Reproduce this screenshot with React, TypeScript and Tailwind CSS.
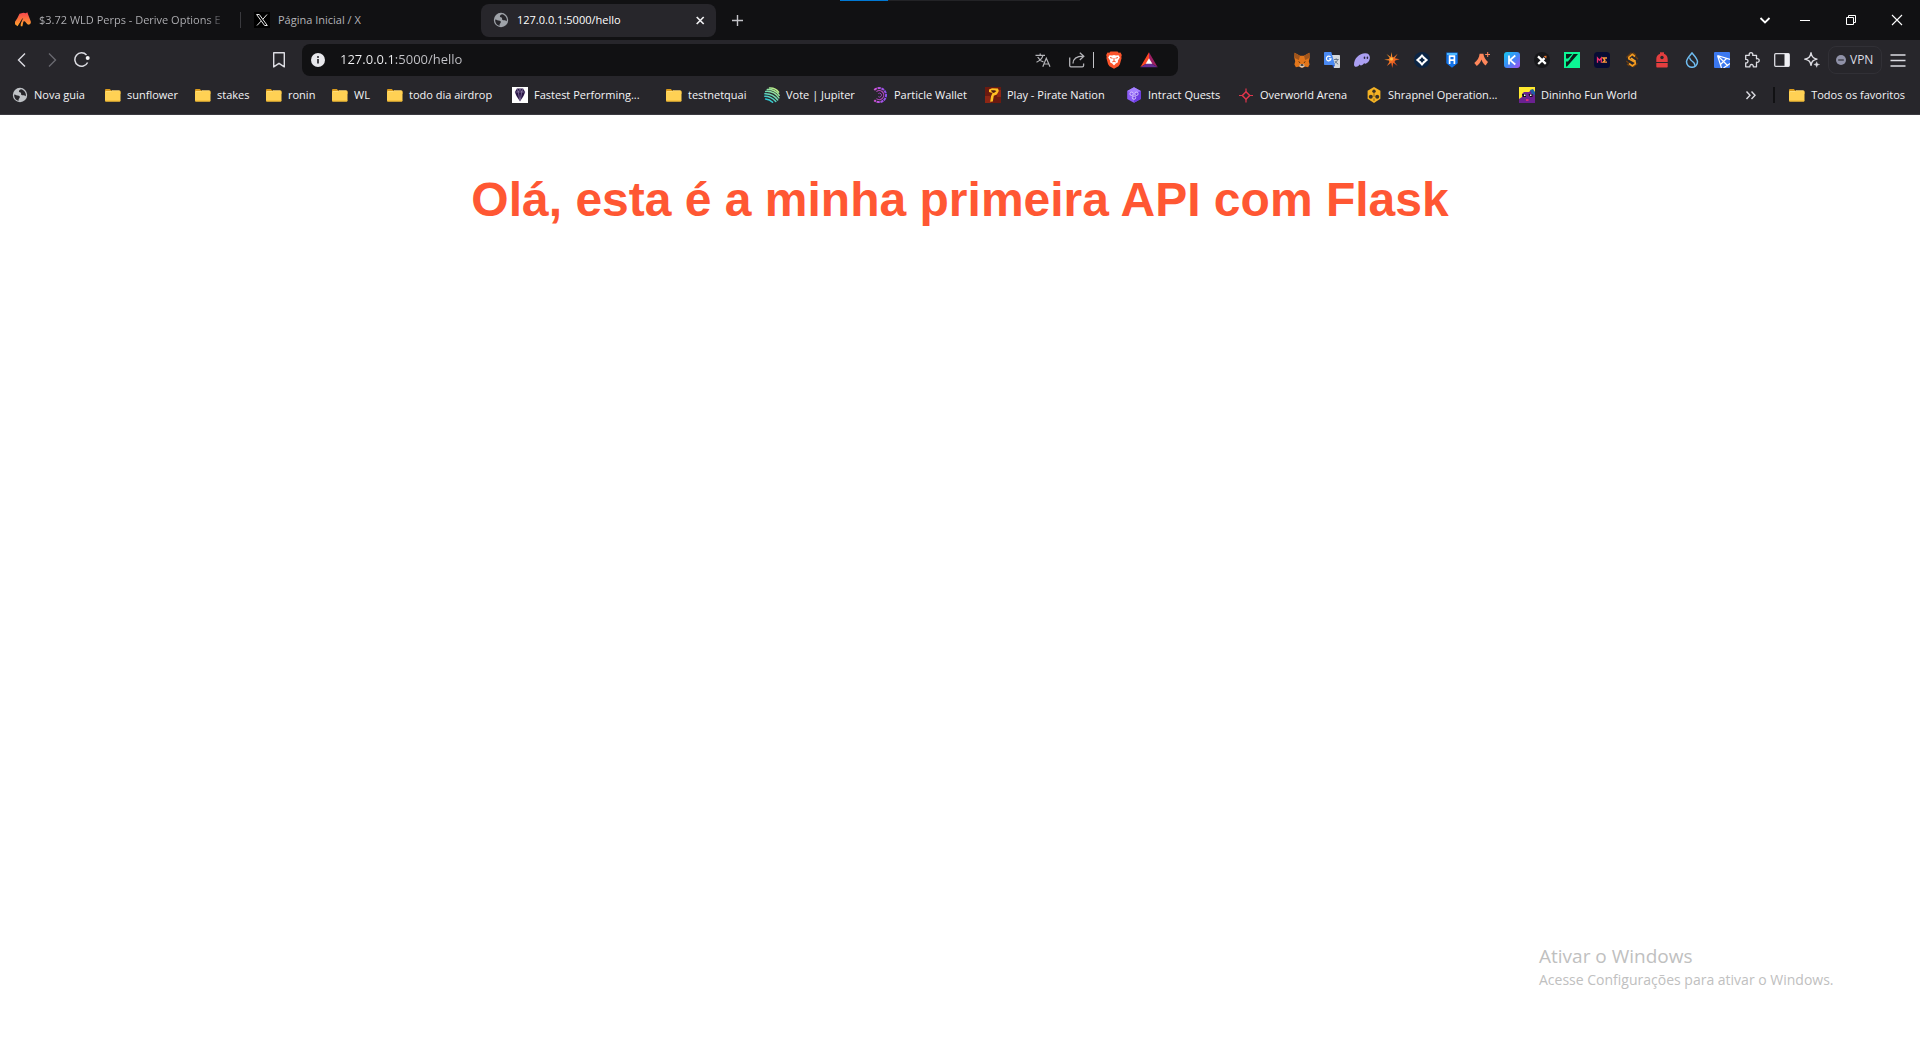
import type { ReactNode } from "react";

function Icon({ children, className = "size-4" }: { children: ReactNode; className?: string }) {
  return (
    <svg viewBox="0 0 16 16" className={`${className} shrink-0`} fill="none" aria-hidden="true">
      {children}
    </svg>
  );
}

const Globe = ({ color = "#bfc2c6", className = "size-4" }: { color?: string; className?: string }) => (
  <Icon className={className}>
    <circle cx="8" cy="8" r="7.2" fill={color} />
    <path
      d="M2.2 7.4c1.6.2 2.2 1 3.600 1.100 1.400.1 2.200.6 2 1.700-.2 1-1.100 1.300-1.200 2.300v1.300c-2.700-.6-4.700-3-4.400-6.400ZM9.300 2.200C8 2.400 6.800 3.300 6.900 4.400c.1 1 1.500.6 2 1.400.5.9-.3 1.500.7 2.100 1.200.7 2.700.1 3.700.9.300.2.500.4.600.6.400-2.900-1-6.100-4.600-7.200Z"
      fill="#27262b"
    />
  </Icon>
);

const Folder = () => (
  <Icon>
    <path d="M0 3.200C0 2.500.5 2 1.200 2h3.600l1.500 1.600h8.100c.6 0 1.100.4 1.100 1V7H0V3.200Z" fill="#d99a1c" />
    <rect x="0" y="4" width="15.500" height="10.500" rx="1" fill="#ffd154" />
    <path d="M0 13.200c0 .8.4 1.300 1.200 1.300h13.100c.8 0 1.200-.5 1.200-1.300V12.700c0 .6-.4.9-1 .9H1c-.6 0-1-.3-1-.9v.5Z" fill="#f0b429" />
    <path d="M1 4.500h5.200l.8-.8h7.500" stroke="#ffe28a" strokeWidth=".7" />
  </Icon>
);

const Derive = () => (
  <Icon>
    <defs>
      <linearGradient id="derive" x1="0" y1="0" x2="0" y2="1">
        <stop offset="0" stopColor="#f7434f" />
        <stop offset="1" stopColor="#ffa62b" />
      </linearGradient>
    </defs>
    <path
      d="M4.500 1.800 8.500.7l2.300.5L12.300.3l1 2.600L15.800 9.500v1.700l-1.800 1.600-1.600-.6-2.600-3L8.400 9.600l-1 4.700H5.800L5.600 12 7 7.500l-4.500 6.800L0 12.300V9.800l2.300-3.600 2.200-4.400Z"
      fill="url(#derive)"
    />
    <path d="m7.600 6.500-3.900 8" stroke="#111113" strokeWidth=".8" />
  </Icon>
);

const XLogo = () => (
  <Icon>
    <rect width="16" height="16" fill="#000" />
    <path d="M2.600 2.500h2.700l8 11h-2.700l-8-11ZM13 2.500 8.900 7.200M7.100 9.100 3 13.500" stroke="#e6e6e6" strokeWidth="1" />
  </Icon>
);

const Gem = () => (
  <Icon>
    <rect width="16" height="16" fill="#fff" />
    <path d="M5 1.500h6L13.200 5 11.500 9 8 14.500 4.500 9 2.800 5 5 1.500Z" fill="#2b1747" />
    <path d="M3 5h10M5 1.500 6.200 5 8 14M11 1.500 9.800 5 8 14M6.200 5 8 2l1.800 3" stroke="#9a8bb5" strokeWidth=".6" />
  </Icon>
);

const Jupiter = () => (
  <Icon>
    <defs>
      <linearGradient id="jup" gradientUnits="userSpaceOnUse" x1="13" y1="2" x2="4" y2="15">
        <stop offset="0" stopColor="#c7f284" />
        <stop offset="1" stopColor="#1fc4dd" />
      </linearGradient>
    </defs>
    <g stroke="url(#jup)" strokeWidth="1.500" strokeLinecap="round">
      <path d="M5.500 1C9 .8 12.800 2.500 14.600 5.200" />
      <path d="M3.300 2.500C8 2 13 4.500 15.200 8.300" />
      <path d="M1.700 4.400C7 4 12 6.500 14.900 10.900" />
      <path d="M.9 6.700C6 6.500 10.800 9 13.700 13" />
      <path d="M.8 9.200C5 9.200 9 11.200 11.800 14.500" />
      <path d="M1.600 12c2.600.2 5 1.300 7 3.200" />
    </g>
  </Icon>
);

const Particle = () => (
  <Icon>
    <defs>
      <linearGradient id="part" gradientUnits="userSpaceOnUse" x1="0" y1="0" x2="15" y2="0">
        <stop offset="0" stopColor="#e455d8" />
        <stop offset="1" stopColor="#8550f0" />
      </linearGradient>
    </defs>
    <path d="M2.300 2.900A7 7 0 1 1 2.300 13.200" stroke="url(#part)" strokeWidth="2" strokeDasharray="3 .7" />
    <path d="M4.400 4.600A4.500 4.500 0 1 1 4.400 11.600" stroke="#b045b8" strokeWidth="1.200" />
    <path d="M6.300 6.500A2 2 0 1 1 6.300 9.700" stroke="#9a46be" strokeWidth="1" />
  </Icon>
);

const Pirate = () => (
  <Icon>
    <rect width="16" height="16" fill="#6b1a10" />
    <path d="M0 9h5l1 7H0zM12 3h4v7h-4z" fill="#8e2614" />
    <path d="M4 2.500 7 1.200l6 .3.800 2.500-2 3.500-3 1.200-1 5.800-2.600.3.800-5.500L7.500 6 4 5V2.500Z" fill="#ffbf23" />
    <path d="M6 3.200h3.500l2 .8-2.600 2L7 5.200 6 3.200Z" fill="#4a1b12" />
  </Icon>
);

const Intract = () => (
  <Icon>
    <path d="M8 0.200 14.800 4v8L8 15.800 1.200 12V4L8 .2Z" fill="#8b5cf6" />
    <path d="M8 8 14.800 4v8L8 15.800V8Z" fill="#6d3ce0" />
    <path d="M8 .2 14.800 4 8 6 1.200 4 8 .2Z" fill="#a580ff" />
    <g stroke="#ddceff" strokeWidth=".9">
      <circle cx="5.600" cy="6.800" r="1.700" />
      <circle cx="10.400" cy="6.800" r="1.700" />
      <circle cx="8" cy="10.600" r="1.700" />
    </g>
  </Icon>
);

const Overworld = () => (
  <Icon>
    <path d="M8 4.800 11.700 8.500 8 12.200 4.300 8.500 8 4.800Z" stroke="#e0364c" strokeWidth="1.500" />
    <path d="M8 1.500v3.300M8 12.200v3.300M1 8.500h3.300M11.700 8.500H15" stroke="#e0364c" strokeWidth="1.200" />
  </Icon>
);

const Shrapnel = () => (
  <Icon>
    <path d="M8 0l2.600 1.500 3.800 2.300v8L10.600 14.300 8 16l-2.600-1.700-3.800-2.500v-8l3.800-2.300L8 0Z" fill="#f5b324" />
    <g fill="#3a3224">
      <circle cx="8" cy="4.200" r="1.700" />
      <circle cx="4.800" cy="9.700" r="2" />
      <circle cx="11.200" cy="9.700" r="2" />
    </g>
    <path d="M8 6v4M8 11.500V14" stroke="#3a3224" strokeWidth=".6" />
  </Icon>
);

const Dininho = () => (
  <Icon>
    <rect width="16" height="16" fill="#ffe92e" />
    <path d="M0 16V12l3-2V7l2-2h5l2-2 3 2 1 3v8H0Z" fill="#6b2191" />
    <path d="M11 3l3-1 2 3v3l-3-1-2-4Z" fill="#1f5fa8" />
    <path d="M3 7h4v3H4zM9.500 7h4v3H11z" fill="#111" />
    <path d="M5 7.500h1.500V9H5zM11 7.500h1.500V9H11z" fill="#fff" />
    <path d="M7 12h2.500v2H7z" fill="#d92c7a" />
  </Icon>
);

const MetaMask = () => (
  <Icon>
    <path d="M.6.800 6 3.800h4L15.400.8l.3 5-.9 3.500.8 3.200-1.500 2.700-3.400-.6L8.800 15.800H7.200l-1.900-1.200-3.400.6-1.500-2.700.8-3.200L.3 5.800.6.800Z" fill="#e2761b" />
    <path d="M.6.800 6 3.800 4.800 8 .3 5.800.6.800ZM15.400.8 10 3.800 11.200 8l4.500-2.200-.3-5Z" fill="#a1551c" />
    <path d="m4 9 2.300 1.300L5.800 11 4 9ZM12 9l-2.300 1.300.5.700L12 9Z" fill="#2b2016" />
    <path d="m5.800 12.500.8-.5h2.800l.8.500.4 2-1.800 1H7.200l-1.800-1 .4-2Z" fill="#d9c9b8" />
    <path d="M6.800 12.300h2.400l.3 1.500h-3l.3-1.500Z" fill="#222" />
  </Icon>
);

const GTranslate = () => (
  <Icon>
    <path d="M7 3h8.300c.4 0 .7.300.7.700V15.300c0 .4-.3.700-.7.700H10L7 3Z" fill="#d5d8dc" />
    <path d="M10 7.500h4.700M12.200 6.300v1.200M13.600 7.500c-.4 1.800-1.800 3.300-3.200 4.200M10.900 9c.8 1.500 2 2.500 3.300 3.200" stroke="#5f6f80" strokeWidth=".9" />
    <path d="M.7 0h6.600l3.700 13H.7C.3 13 0 12.700 0 12.300V.7C0 .3.300 0 .7 0Z" fill="#4a8af4" />
    <path d="M8.300 13H11l-1.600 3-1.100-3Z" fill="#2a56c6" />
    <path d="M6.500 5A2.300 2.300 0 1 0 7 6.900H4.900" stroke="#fff" strokeWidth="1.200" />
  </Icon>
);

const Phantom = () => (
  <Icon>
    <path d="M0 12.700C0 6.500 5.300 1.300 11.200 1.300c3.300 0 4.700 2 4.700 4.300 0 3.300-2.500 6.100-4.500 6.100-.8 0-1.100-.5-1.200-.8-.8 1.500-2.200 2.500-3.300 2.500-.8 0-1.100-.6-1.100-1.200-.9 1.200-2 2.600-3.600 2.600-1.300 0-2.200-.9-2.200-2.100Z" fill="#ab9ff2" />
    <ellipse cx="10.500" cy="5.700" rx=".8" ry="1.300" fill="#2a2740" />
    <ellipse cx="13.400" cy="5.700" rx=".8" ry="1.300" fill="#2a2740" />
  </Icon>
);

const Spark = () => (
  <Icon>
    <defs>
      <linearGradient id="spark" x1="0" y1="0" x2="1" y2="1">
        <stop offset="0" stopColor="#ffb52e" />
        <stop offset="1" stopColor="#e8321c" />
      </linearGradient>
    </defs>
    <path
      d="m7.600 0 .7 5L9.700 5.300 13.600 1.700 10.800 6.300l4.900 1-4.500 1.300L10.500 10l3.100 4-4.300-3.200L8.200 16l-.9-5.200L2.800 14 5.400 10 4.900 8.600.2 7.800 4.900 7.100 5.600 5.700 2.500 2l4.200 3L7.600 0Z"
      fill="url(#spark)"
    />
    <circle cx="7.500" cy="7" r="1.500" fill="#ffc04a" />
  </Icon>
);

const Rabby = () => (
  <Icon>
    <circle cx="8" cy="8" r="8" fill="#0b2545" />
    <path d="M8 1.900 10.200 4.400 11.600 5.800 14.100 8l-2.500 2.200-1.400 1.400L8 14.100l-2.200-2.500-1.400-1.400L1.900 8l2.500-2.200 1.400-1.400L8 1.900Z" fill="#fff" />
    <path d="M8 4.900 9.300 6.700 11.100 8 9.300 9.300 8 11.100 6.700 9.300 4.900 8 6.700 6.700 8 4.900Z" fill="#0b2545" />
  </Icon>
);

const Ronin = () => (
  <Icon>
    <path d="M2.300.5h11.400v10.700L8 15.700l-5.700-4.500V.5Z" fill="#1273ea" />
    <path d="M3 1h10v2H3z" fill="#49b6ff" />
    <path d="M5.600 12V4.200h4.800V12M5.600 8.200h4.800" stroke="#fff" strokeWidth="1.700" />
  </Icon>
);

const Argent = () => (
  <Icon>
    <path d="M5.600 1.800h3.800c.2 3 2.200 6 4.600 8.200l-2.400 3.600C9.500 12 8.100 10 7.500 7.600 6.900 10 4.600 12.900 2.800 14L.3 11C3.300 8.700 5.300 5.500 5.600 1.800Z" fill="#ff875b" />
    <path d="M13.700 0v5M11.200 2.500h5" stroke="#ff875b" strokeWidth="1" />
  </Icon>
);

const Keplr = () => (
  <Icon>
    <defs>
      <linearGradient id="kep" x1="0" y1="0" x2="1" y2="1">
        <stop offset="0" stopColor="#16c7f0" />
        <stop offset=".5" stopColor="#3a8bf5" />
        <stop offset="1" stopColor="#a64cf0" />
      </linearGradient>
    </defs>
    <rect width="16" height="16" rx="3" fill="url(#kep)" />
    <path d="M5 3.500v9M11.300 3.500 6 8l5.300 4.500" stroke="#fff" strokeWidth="1.700" />
  </Icon>
);

const Xverse = () => (
  <Icon>
    <circle cx="8" cy="8" r="8" fill="#17171a" />
    <path d="m4 4.300 7.800 7.500M10.600 6.200 4.200 12" stroke="#fff" strokeWidth="2.300" />
    <path d="m9.700 4 2.800-.3-.2 2.800-2.600-2.500Z" fill="#ee7a30" />
  </Icon>
);

const GreenF = () => (
  <Icon>
    <rect width="16" height="16" fill="#0cf594" />
    <path d="M2 2h6.300L4 6.500H2zM9.500 2H14L3 14.500H2V9.500h2L9.500 2Z" fill="#0b1d1b" />
    <path d="M2 7.500h5L2 8.500z" fill="#0cf594" />
  </Icon>
);

const MagicEden = () => (
  <Icon>
    <rect width="16" height="16" rx="3.500" fill="#070c34" />
    <path d="M3.500 10.700V6L5.400 8.200 7.300 6v4.700" stroke="#ef2e6d" strokeWidth="1.300" />
    <path d="M13 6H9L11 8.200 9 10.200h4" stroke="#ff9a3a" strokeWidth="1.300" />
  </Icon>
);

const GoldS = () => (
  <Icon>
    <path d="m2.500 5.500 5-4.700M9 15l4.500-3.500M2.300 9l2.500 2.300M11.500 4.500 14 7.200M3 12l2.500 2M9 .8l3 2.500" stroke="#6b3d10" strokeWidth="1.300" />
    <path d="M11 4.500 8.300 2.300 4.800 5.300v1.500l6.400 3.400v1.600L8.300 14 5 11.500" stroke="#f39a1e" strokeWidth="1.700" />
    <path d="m7 6.200 4.600 3.200" stroke="#f7a832" strokeWidth="1.600" />
  </Icon>
);

const Backpack = () => (
  <Icon>
    <path d="M6 .3h4V2H6z" fill="#e33e3f" />
    <path d="M2.300 7.500c0-3.700 2-5.700 5.700-5.700s5.700 2 5.700 5.700V10H2.300V7.500ZM2.300 11h11.400v3.600c0 .7-.4 1-1 1H3.300c-.6 0-1-.3-1-1V11Z" fill="#e33e3f" />
    <circle cx="8" cy="5.500" r="1.700" fill="#27262b" />
  </Icon>
);

const Sui = () => (
  <Icon>
    <path d="M8 .9c2.900 3.300 5.500 6 5.500 8.900A5.500 5.500 0 0 1 8 15.300a5.500 5.500 0 0 1-5.500-5.500C2.500 6.900 5.100 4.200 8 .9Z" stroke="#6fbcf0" strokeWidth="1.500" />
    <path d="M5.500 5.500c.6 4.800 6 3.500 5.300 8.300" stroke="#6fbcf0" strokeWidth="1.400" />
  </Icon>
);

const Plane = () => (
  <Icon>
    <rect width="16" height="16" rx="1" fill="#3b78f0" />
    <path d="m3.500 3.500 12.500 4M3.500 3.500l4 12.500M3.500 3.500 14 14M6.500 12.500 12.500 6.500M9.500 16 16 11.500" stroke="#fff" strokeWidth="1.200" />
  </Icon>
);

const Puzzle = () => (
  <Icon>
    <path
      d="M1.700 3.300h3.600c-.4-1.500.3-2.600 1.700-2.600s2.100 1.100 1.700 2.600h3.800v3.500c1.600-.4 2.700.4 2.700 1.700s-1.100 2.100-2.700 1.700v4.600H9.300c.2-1.600-.6-2.300-1.700-2.300s-1.900.7-1.700 2.300H1.700v-3.900c1.600.2 2.300-.7 2.300-1.800s-.7-1.900-2.300-1.700V3.300Z"
      stroke="#dcdce2"
      strokeWidth="1.300"
      strokeLinejoin="round"
    />
  </Icon>
);

const SidePanel = () => (
  <Icon>
    <rect x=".7" y="1.700" width="14.600" height="12.600" rx="1" stroke="#dcdce2" strokeWidth="1.300" />
    <path d="M10.500 1.700H15v12.600h-4.500z" fill="#f0f0f4" />
  </Icon>
);

const Sparkle = () => (
  <Icon>
    <path
      d="M7 .8c.8 4 2 5.500 6 6.300-4 .9-5.200 2.300-6 6.300-.8-4-2-5.400-6.300-6.300C5 6.300 6.200 4.800 7 .8Z"
      stroke="#dcdce2"
      strokeWidth="1.400"
      strokeLinejoin="round"
    />
    <path d="M12.700 9.700c.3 1.800.9 2.400 2.800 2.800-1.900.4-2.500 1-2.800 2.800-.3-1.800-.9-2.400-2.800-2.800 1.900-.4 2.500-1 2.800-2.800Z" fill="#dcdce2" stroke="#dcdce2" strokeWidth=".5" />
  </Icon>
);

const extensions: { name: string; icon: ReactNode }[] = [
  { name: "MetaMask", icon: <MetaMask /> },
  { name: "Google Translate", icon: <GTranslate /> },
  { name: "Phantom", icon: <Phantom /> },
  { name: "Spark", icon: <Spark /> },
  { name: "Rabby", icon: <Rabby /> },
  { name: "Ronin", icon: <Ronin /> },
  { name: "Argent", icon: <Argent /> },
  { name: "Keplr", icon: <Keplr /> },
  { name: "Xverse", icon: <Xverse /> },
  { name: "Fewcha", icon: <GreenF /> },
  { name: "Magic Eden", icon: <MagicEden /> },
  { name: "Station", icon: <GoldS /> },
  { name: "Backpack", icon: <Backpack /> },
  { name: "Sui", icon: <Sui /> },
  { name: "Plane", icon: <Plane /> },
  { name: "Extensões", icon: <Puzzle /> },
  { name: "Painel lateral", icon: <SidePanel /> },
  { name: "Leo", icon: <Sparkle /> },
];

const bookmarks: { label: string; icon: ReactNode; width: string }[] = [
  { label: "Nova guia", icon: <Globe />, width: "w-[93px]" },
  { label: "sunflower", icon: <Folder />, width: "w-[90px]" },
  { label: "stakes", icon: <Folder />, width: "w-[71px]" },
  { label: "ronin", icon: <Folder />, width: "w-[66px]" },
  { label: "WL", icon: <Folder />, width: "w-[55px]" },
  { label: "todo dia airdrop", icon: <Folder />, width: "w-[125px]" },
  { label: "Fastest Performing...", icon: <Gem />, width: "w-[154px]" },
  { label: "testnetquai", icon: <Folder />, width: "w-[98px]" },
  { label: "Vote | Jupiter", icon: <Jupiter />, width: "w-[108px]" },
  { label: "Particle Wallet", icon: <Particle />, width: "w-[113px]" },
  { label: "Play - Pirate Nation", icon: <Pirate />, width: "w-[141px]" },
  { label: "Intract Quests", icon: <Intract />, width: "w-[112px]" },
  { label: "Overworld Arena", icon: <Overworld />, width: "w-[128px]" },
  { label: "Shrapnel Operation...", icon: <Shrapnel />, width: "w-[153px]" },
  { label: "Dininho Fun World", icon: <Dininho />, width: "w-[150px]" },
];

function TabStrip() {
  return (
    <div className="relative flex h-10 items-center bg-[#111113] text-[11px] text-[#b4b4b8]">
      <div className="absolute inset-x-0 top-0 flex justify-center">
        <div className="h-px w-12 bg-[#0078d4]" />
        <div className="h-px w-48 bg-[#232326]" />
      </div>
      <button className="flex h-8 w-60 items-center gap-2 pl-[15px] text-left">
        <Derive />
        <span className="whitespace-nowrap bg-[linear-gradient(90deg,#b4b4b8_92%,#3a3a3e)] bg-clip-text text-transparent">
          $3.72 WLD Perps - Derive Options E
        </span>
      </button>
      <div className="h-4 w-px bg-[#3a3a3e]" />
      <button className="flex h-8 w-60 items-center gap-2 pl-[13px] text-left">
        <XLogo />
        <span>Página Inicial / X</span>
      </button>
      <div className="flex h-[33px] w-[235px] items-center rounded-lg bg-[#27262b] pl-3 pr-2 text-white">
        <button className="flex flex-1 items-center gap-2 text-left">
          <Globe color="#9ea2a8" />
          <span>127.0.0.1:5000/hello</span>
        </button>
        <button aria-label="Fechar guia" className="flex size-4 items-center justify-center">
          <Icon>
            <path d="m4.700 5 7 7M11.700 5l-7 7" stroke="#f0f0f2" strokeWidth="1.700" />
          </Icon>
        </button>
      </div>
      <button aria-label="Nova guia" className="ml-[13px] flex size-4 items-center justify-center">
        <Icon>
          <path d="M8.500 3v11M3 8.500h11" stroke="#c4c4c8" strokeWidth="1.400" />
        </Icon>
      </button>
      <div className="ml-auto flex items-center">
        <button aria-label="Pesquisar guias" className="flex h-10 w-[34px] items-center justify-center">
          <Icon>
            <path d="m3.500 6 4.500 4.500L12.500 6" stroke="#fff" strokeWidth="1.800" />
          </Icon>
        </button>
        <button aria-label="Minimizar" className="flex h-10 w-[46px] items-center justify-center">
          <Icon>
            <path d="M3 8.500h10" stroke="#fff" />
          </Icon>
        </button>
        <button aria-label="Restaurar" className="flex h-10 w-[46px] items-center justify-center">
          <Icon>
            <path d="M3.500 5.500h7v7h-7zM5.500 5.500v-2h7v7h-2" stroke="#fff" />
          </Icon>
        </button>
        <button aria-label="Fechar" className="flex h-10 w-[46px] items-center justify-center">
          <Icon>
            <path d="m3 3 10 10M13 3 3 13" stroke="#fff" strokeWidth="1.100" />
          </Icon>
        </button>
      </div>
    </div>
  );
}

function Toolbar() {
  return (
    <div className="flex h-10 items-center pr-[7px]">
      <div className="flex items-center pl-[7px]">
        <button aria-label="Voltar" className="flex size-[30px] items-center justify-center">
          <Icon>
            <path d="M11 1.500 4.500 8l6.500 6.500" stroke="#dcdce2" strokeWidth="1.400" />
          </Icon>
        </button>
        <button aria-label="Avançar" className="flex size-[30px] items-center justify-center">
          <Icon>
            <path d="M5 1.500 11.500 8 5 14.500" stroke="#69696f" strokeWidth="1.400" />
          </Icon>
        </button>
        <button aria-label="Recarregar" className="flex size-[30px] items-center justify-center">
          <Icon>
            <path d="M13.600 10.500A6.700 6.700 0 1 1 12.500 3" stroke="#dcdce2" strokeWidth="1.500" />
            <circle cx="13.700" cy="6" r="2" fill="#f4f4f6" />
          </Icon>
        </button>
      </div>
      <button aria-label="Adicionar aos favoritos" className="ml-[167px] flex size-[30px] items-center justify-center">
        <Icon>
          <path d="M2.700.7h10.600v14.200L8 11.300l-5.300 3.600V.7Z" stroke="#dcdce2" strokeWidth="1.400" strokeLinejoin="round" />
        </Icon>
      </button>
      <div className="ml-2 flex h-8 flex-1 items-center rounded-lg bg-[#111113] pl-2">
        <button aria-label="Informações do site" className="mr-[14px]">
          <Icon>
            <circle cx="8" cy="8" r="7" fill="#e8e8ec" />
            <path d="M8 7v4.500" stroke="#27262b" strokeWidth="1.700" />
            <circle cx="8" cy="4.900" r="1" fill="#27262b" />
          </Icon>
        </button>
        <input
          aria-label="Barra de endereço"
          defaultValue="127.0.0.1:5000/hello"
          className="min-w-0 flex-1 bg-[linear-gradient(90deg,#f4f4f6_55px,#c6c6cb_55px)] bg-clip-text text-[13px] text-transparent outline-none"
        />
        <div className="flex items-center gap-[18px] pr-5">
          <button aria-label="Traduzir">
            <Icon>
              <path d="M.5 3.300h9.500M5.200 1.500v1.800M8 3.300C7.200 6.200 4.500 8.800 1.500 10.200M2.700 5c1.200 2.300 3.300 4.200 5.800 5M7.800 14.700l3.500-8.500 3.700 8.500M9 12h5" stroke="#b4b4b8" strokeWidth="1.200" />
            </Icon>
          </button>
          <button aria-label="Compartilhar">
            <Icon>
              <path d="M.7 5.500v8c0 .8.400 1.300 1.300 1.300h11.300c.9 0 1.300-.5 1.300-1.300v-2M4 11.500c.2-4.500 3-7.300 10-7.300M10.800.8l4 3.400-4 3.700" stroke="#b4b4b8" strokeWidth="1.300" />
            </Icon>
          </button>
          <div className="-ml-2.5 -mr-1.5 h-4 w-px bg-[#c4c4c8]" />
          <button aria-label="Brave Shields">
            <Icon className="h-[18px] w-4">
              <path d="M4.500-.6h7l1.200 1.300 1.800-.1 1.300 2.300-.5 2 .3 1-1.700 6.300-1.400 2L8 16.800l-4.500-2.600-1.400-2L.4 5.900l.3-1-.5-2L1.500.6l1.800.1L4.500-.6Z" fill="#fb542b" />
              <path d="m3.500 3.200 2.500.3L8 3l2 .5 2.500-.3 1.300 2.300-2 3.200.2 1.500-2.200 1.200L8 13.500l-1.800-2.100L4 10.200l.2-1.500-2-3.200 1.300-2.300Z" fill="#fff" />
              <path d="m4 5.500 2.500.8M12 5.500l-2.500.8M8 6v3.300M6.300 9.800 8 9.200l1.700.6" stroke="#fb542b" strokeWidth="1" />
            </Icon>
          </button>
          <button aria-label="Brave Rewards">
            <Icon className="h-4 w-[18px]">
              <path d="M8 .3-.7 15.300 8 10V.3Z" fill="#ff4724" />
              <path d="M8 .3v9.700l8.700 5.300L8 .3Z" fill="#9e1f63" />
              <path d="M-.7 15.300 8 10l8.700 5.300H-.7Z" fill="#662d91" />
              <path d="m8 6.300 3.300 5.500H4.700L8 6.300Z" fill="#fff" />
            </Icon>
          </button>
        </div>
      </div>
      <div className="ml-[109px] flex items-center">
        {extensions.map((e) => (
          <button key={e.name} aria-label={e.name} className="flex size-[30px] items-center justify-center">
            {e.icon}
          </button>
        ))}
        <button className="mx-px flex h-7 w-[54px] items-center gap-1 rounded-lg border border-[#313036] pl-[7px] text-xs text-[#dcdce2]">
          <Icon className="size-[10px]">
            <circle cx="8" cy="8" r="8" fill="#9092a8" />
            <path d="M3.500 8h9" stroke="#33333c" strokeWidth="2" />
          </Icon>
          VPN
        </button>
        <button aria-label="Menu" className="flex size-[30px] items-center justify-center">
          <Icon>
            <path d="M.5 3h15M.5 8.500h15M.5 14h15" stroke="#dcdce2" strokeWidth="1.400" />
          </Icon>
        </button>
      </div>
    </div>
  );
}

function BookmarksBar() {
  return (
    <nav className="flex h-[34px] items-center pb-1 pl-3 pr-[15px] text-[11px] text-[#f4f4f6]">
      {bookmarks.map((b) => (
        <a key={b.label} href="#" className={`flex shrink-0 items-center gap-1.5 whitespace-nowrap ${b.width}`}>
          {b.icon}
          {b.label}
        </a>
      ))}
      <button aria-label="Mais favoritos" className="ml-auto mr-[14px]">
        <Icon>
          <path d="m3.500 4.500 3.500 3.700-3.500 3.700M8.500 4.500l3.500 3.700-3.500 3.700" stroke="#dcdce2" strokeWidth="1.400" />
        </Icon>
      </button>
      <div className="h-4 w-0.5 bg-[#111113]" />
      <a href="#" className="ml-[14px] flex items-center gap-1.5 whitespace-nowrap">
        <Folder />
        Todos os favoritos
      </a>
    </nav>
  );
}

export default function App() {
  return (
    <div className="relative min-h-screen bg-white font-['Open_Sans','Noto_Sans',sans-serif]">
      <header className="border-b border-[#3b3a40] bg-[#27262b]">
        <TabStrip />
        <Toolbar />
        <BookmarksBar />
      </header>
      <main className="pt-[57px] text-center">
        <h1 className="font-['Liberation_Sans',Arial,sans-serif] text-5xl font-bold leading-[56px] text-[#ff5733]">
          Olá, esta é a minha primeira API com Flask
        </h1>
      </main>
      <aside className="absolute bottom-[50px] right-20 w-[301px] whitespace-nowrap text-[#c0c0c0]">
        <p className="mb-0.5 text-[19px] leading-6">Ativar o Windows</p>
        <p className="text-sm leading-5">Acesse Configurações para ativar o Windows.</p>
      </aside>
    </div>
  );
}
